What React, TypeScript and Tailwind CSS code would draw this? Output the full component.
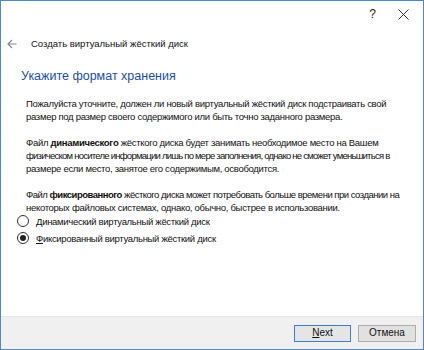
import React from "react";

export default function App() {
  const body = { fontFamily: '"Liberation Sans", Arial, sans-serif' };
  const ui = { fontFamily: '"Liberation Sans", Arial, sans-serif' };
  return (
    <div className="w-[424px] h-[350px] border border-[#4a8ac7] bg-white flex flex-col overflow-hidden">
      <div className="h-[26px] flex items-center justify-end pr-[14px] gap-[22px] text-[#222]" style={ui}>
        <span className="text-[12px]">?</span>
        <svg width="11" height="11" viewBox="0 0 11 11">
          <path d="M0.5 0.5 L10.5 10.5 M10.5 0.5 L0.5 10.5" stroke="#333" strokeWidth="1" />
        </svg>
      </div>
      <div className="flex items-center h-[34px] pl-[6px]" style={ui}>
        <svg width="10" height="10" viewBox="0 0 10 10">
          <path d="M9.5 5 H1 M5 1 L1 5 L5 9" stroke="#888" strokeWidth="1.2" fill="none" />
        </svg>
        <span className="ml-[14px] text-[9.5px] text-[#111]">Создать виртуальный жёсткий диск</span>
      </div>
      <div className="pl-[20px] mt-[6px] text-[12.5px] text-[#1c4fa8]" style={ui}>
        Укажите формат хранения
      </div>
      <div className="pl-[25px] mt-[11px] text-[9.5px] tracking-[-0.3px] leading-[13px] text-[#111] flex-1 whitespace-nowrap" style={body}>
        <p>
          Пожалуйста уточните, должен ли новый виртуальный жёсткий диск подстраивать свой
          <br />
          размер под размер своего содержимого или быть точно заданного размера.
        </p>
        <p className="mt-[13px]">
          Файл <b>динамического</b> жёсткого диска будет занимать необходимое место на Вашем
          <br />
          <span className="tracking-[-0.75px]">
            физическом носителе информации лишь по мере заполнения, однако не сможет уменьшиться в
          </span>
          <br />
          размере если место, занятое его содержимым, освободится.
        </p>
        <p className="mt-[13px]">
          <span className="tracking-[-0.5px]">
            Файл <b>фиксированного</b> жёсткого диска может потребовать больше времени при создании на
          </span>
          <br />
          некоторых файловых системах, однако, обычно, быстрее в использовании.
        </p>
        <div className="mt-[1px] -ml-[9px] flex flex-col gap-[4px]">
          <label className="flex items-center gap-[7px] h-[13px]">
            <span className="w-[12px] h-[12px] rounded-full border border-[#333] bg-white" />
            <span>
              <span className="underline">Д</span>инамический виртуальный жёсткий диск
            </span>
          </label>
          <label className="flex items-center gap-[7px] h-[13px]">
            <span className="w-[12px] h-[12px] rounded-full border border-[#333] bg-white flex items-center justify-center">
              <span className="w-[6px] h-[6px] rounded-full bg-[#222]" />
            </span>
            <span>
              <span className="underline">Ф</span>иксированный виртуальный жёсткий диск
            </span>
          </label>
        </div>
      </div>
      <div className="h-[33px] bg-[#f0f0f0] border-t border-[#e6e6e6] flex items-center justify-end gap-[7px] pr-[7px]" style={body}>
        <button className="w-[57px] h-[17px] border border-[#3c7fd0] bg-[#e5e5e5] text-[10px] text-[#111] leading-none">
          <span className="underline">N</span>ext
        </button>
        <button className="w-[58px] h-[17px] border border-[#adadad] bg-[#e1e1e1] text-[10px] text-[#111] leading-none">
          Отмена
        </button>
      </div>
    </div>
  );
}
